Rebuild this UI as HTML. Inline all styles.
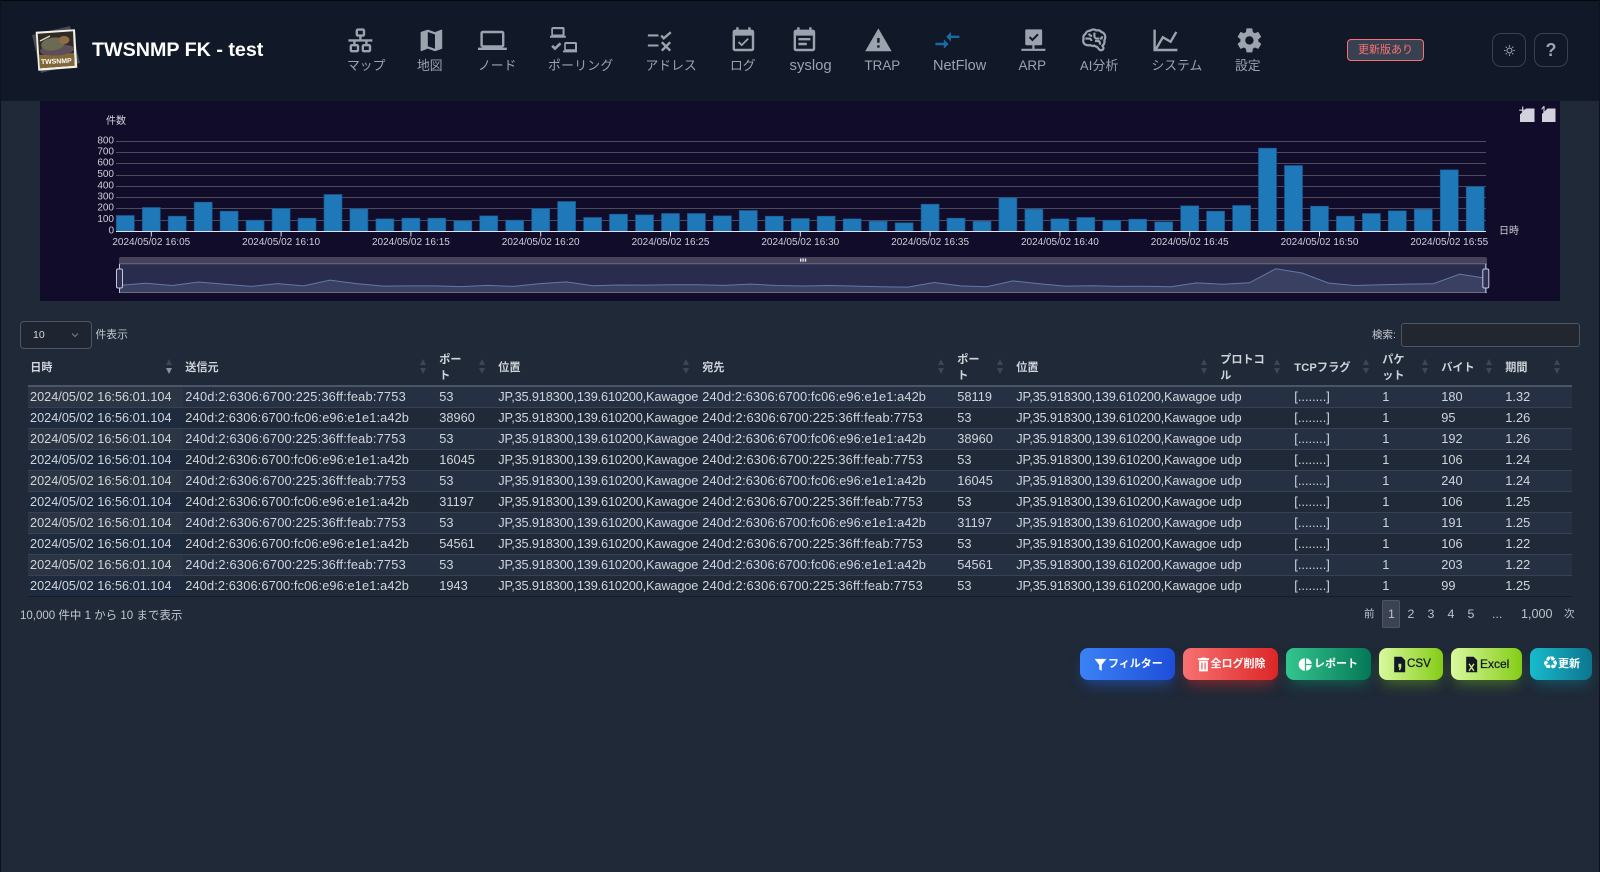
<!DOCTYPE html>
<html lang="ja">
<head>
<meta charset="utf-8">
<title>TWSNMP FK - test</title>
<style>
*{box-sizing:border-box}
html,body{margin:0;padding:0;width:1600px;height:872px;overflow:hidden;background:#1f2937;font-family:"Liberation Sans","Noto Sans CJK JP",sans-serif;color:#d1d5db}
#hdr{position:absolute;left:0;top:0;width:1600px;height:101px;background:#111827;border-top:1px solid #05070b}
#edgeL{position:absolute;left:0;top:0;width:1px;height:872px;background:#0e131d}
#edgeR{position:absolute;right:0;top:0;width:1px;height:872px;background:#0e131d}
.t{position:absolute;white-space:nowrap}
.ic{position:absolute;top:25.6px;width:28.8px;height:28.8px;fill:#9ca3af}
.lb{position:absolute;top:56.5px;line-height:18px;font-size:14px;color:#9ca3af;white-space:nowrap}
.lj{font-size:12.8px}
#title{position:absolute;left:92px;top:37px;line-height:26px;font-size:19.7px;font-weight:bold;color:#fff;white-space:nowrap}
#badge{position:absolute;left:1347px;top:39px;width:77px;height:22px;background:#374151;border:1px solid #f87171;border-radius:4px;color:#f87171;font-size:11px;line-height:20px;text-align:center}
.rb{position:absolute;top:33px;width:34px;height:34px;border:1px solid #374151;border-radius:9px;text-align:center;color:#9ca3af}
#chart{position:absolute;left:40px;top:101px;width:1520px;height:200px;background:#100c2a}
#svgc{position:absolute;left:0;top:0;width:1600px;height:872px}
#sel{position:absolute;left:20px;top:321px;width:72px;height:28px;background:#1f2530;border:1px solid #4b5563;border-radius:4px;font-size:10.5px;line-height:26px;padding-left:12px;color:#d1d5db}
#srch{position:absolute;left:1401px;top:323px;width:179px;height:24px;background:#21262f;border:1px solid #4b5563;border-radius:3px}
table{position:absolute;left:28px;top:351px;width:1544px;table-layout:fixed;border-collapse:separate;border-spacing:0}
th{height:36px;padding:0 0 1px 2.3px;font-size:11.1px;line-height:16px;text-align:left;font-weight:bold;color:#d1d5db;border-bottom:2px solid #4b5563;vertical-align:middle;position:relative}
td{height:21px;padding:0 0 0 2.3px;font-size:12.8px;line-height:20px;white-space:nowrap;color:#d1d5db;border-bottom:1px solid #374151;overflow:visible}
td:first-child{font-size:12.7px;padding-left:2px;letter-spacing:.02px}
td:nth-child(4),td:nth-child(7){letter-spacing:-.18px}
tbody tr:nth-child(odd) td{background:#253042}
tbody tr:nth-child(odd) td:first-child{background:#2b3543}
tbody tr:nth-child(even) td:first-child{background:#1e2a3e}
tbody tr:last-child td{border-bottom:1px solid #151d2b}
td.ip{letter-spacing:.21px}
td.a{letter-spacing:.11px}
.s{position:absolute;width:0;height:0;border-left:3.5px solid transparent;border-right:3.5px solid transparent}
.u{border-bottom:6px solid #3b4656;top:8px}
.d{border-top:6px solid #3b4656;top:17px}
.on{border-top-color:#8b93a0}
.pg{position:absolute;top:605px;font-size:12.4px;line-height:18px;color:#bcc2cb;white-space:nowrap}
#cur{position:absolute;left:1382px;top:600px;width:18px;height:28px;background:#3b4352;border:1px solid #4b5563;border-radius:2px}
.b{position:absolute;top:648px;height:32px;border-radius:8px}
.bt{position:absolute;top:655px;line-height:18px;font-size:11px;font-weight:bold;color:#fff;white-space:nowrap}
.bi{position:absolute;top:656.5px;width:15px;height:15px}
</style>
</head>
<body>
<div id="hdr"></div>

<svg style="position:absolute;left:28px;top:22px;width:60px;height:58px" viewBox="28 22 60 58">
<polygon points="32,35 70,26 80,63 41,73" fill="#454a55"/>
<polygon points="35.7,31.7 75,29.3 77.3,67.7 38.3,70.7" fill="#f1efe6"/>
<polygon points="37.7,33.7 73,31.3 74.6,65.6 40,68.2" fill="#2f2a24"/>
<polygon points="39.3,55 74,53 74.6,65.6 40,68.2" fill="#806737"/>
<ellipse cx="57" cy="50" rx="17" ry="5.5" fill="#5e4e5c" transform="rotate(-4 57 50)"/>
<ellipse cx="53" cy="44" rx="12" ry="6.5" fill="#6d6a53" transform="rotate(-8 53 44)"/>
<ellipse cx="64" cy="40" rx="5.5" ry="4" fill="#8f6c48"/>
<path d="M40 41 L50 36" stroke="#d8d8d0" stroke-width="1.4" fill="none"/>
<text x="41" y="63.5" font-size="6.9" font-weight="bold" fill="#fff" font-family="Liberation Sans,sans-serif" transform="rotate(-2.5 56 62)">TWSNMP</text>
</svg>
<div id="title">TWSNMP FK - test</div>

<svg class="ic" style="left:346.1px" viewBox="0 0 24 24"><path d="M10,2C8.89,2 8,2.89 8,4V7C8,8.11 8.89,9 10,9H11V11H2V13H6V15H5C3.89,15 3,15.89 3,17V20C3,21.11 3.89,22 5,22H9C10.11,22 11,21.11 11,20V17C11,15.89 10.11,15 9,15H8V13H16V15H15C13.89,15 13,15.89 13,17V20C13,21.11 13.89,22 15,22H19C20.11,22 21,21.11 21,20V17C21,15.89 20.11,15 19,15H18V13H22V11H13V9H14C15.11,9 16,8.11 16,7V4C16,2.89 15.11,2 14,2H10M10,4H14V7H10V4M5,17H9V20H5V17M15,17H19V20H15V17Z"/></svg>
<div class="lb lj" style="left:347px">マップ</div>

<svg class="ic" style="left:416.8px" viewBox="0 0 24 24"><path d="M15,19L9,16.89V5L15,7.11M20.5,3C20.44,3 20.39,3 20.34,3L15,5.1L9,3L3.36,4.9C3.15,4.97 3,5.15 3,5.38V20.5A0.5,0.5 0 0,0 3.5,21L3.66,20.97L9,18.9L15,21L20.64,19.1C20.85,19 21,18.85 21,18.62V3.5A0.5,0.5 0 0,0 20.5,3Z"/></svg>
<div class="lb lj" style="left:417px">地図</div>

<svg class="ic" style="left:478.1px" viewBox="0 0 24 24"><path d="M4,6H20V16H4M20,18A2,2 0 0,0 22,16V6C22,4.89 21.1,4 20,4H4C2.89,4 2,4.89 2,6V16A2,2 0 0,0 4,18H0V20H24V18H20Z"/></svg>
<div class="lb lj" style="left:478px">ノード</div>

<svg class="ic" style="left:548.6px" viewBox="0 0 24 24"><path transform="translate(1.2,-.9) scale(.52)" stroke="#9ca3af" stroke-width="1.3" d="M4,6H20V16H4M20,18A2,2 0 0,0 22,16V6C22,4.89 21.1,4 20,4H4C2.89,4 2,4.89 2,6V16A2,2 0 0,0 4,18H0V20H24V18H20Z"/><path transform="translate(12,11.7) scale(.5)" stroke="#9ca3af" stroke-width="1.3" d="M4,6H20V16H4M20,18A2,2 0 0,0 22,16V6C22,4.89 21.1,4 20,4H4C2.89,4 2,4.89 2,6V16A2,2 0 0,0 4,18H0V20H24V18H20Z"/><path d="M2.6 16.5L5 18.8L9.6 14.4" fill="none" stroke="#9ca3af" stroke-width="2.2"/></svg>
<div class="lb lj" style="left:548px;letter-spacing:.3px">ポーリング</div>

<svg class="ic" style="left:644.6px" viewBox="0 0 24 24"><path d="M2.4 7h8.8v1.7H2.4zM2.4 15.4h8.8v1.7H2.4z"/><path d="M13.5 8L15.6 10.3L21.5 5.2M14 13.5L21 20.5M21 13.5L14 20.5" fill="none" stroke="#9ca3af" stroke-width="2"/></svg>
<div class="lb lj" style="left:645.5px">アドレス</div>

<svg class="ic" style="left:728.9px" viewBox="0 0 24 24"><path fill-rule="evenodd" d="M19 3h-1V1h-2v2H8V1H6v2H5C3.9 3 3 3.9 3 5v14c0 1.1.9 2 2 2h14c1.1 0 2-.9 2-2V5c0-1.1-.9-2-2-2zm0 16H5V8h14v11z"/><path d="M16.53 11.06L15.47 10L10.59 14.88L8.47 12.76L7.41 13.82L10.59 17Z"/></svg>
<div class="lb lj" style="left:730px">ログ</div>

<svg class="ic" style="left:790.1px" viewBox="0 0 24 24"><path fill-rule="evenodd" d="M19 3h-1V1h-2v2H8V1H6v2H5C3.9 3 3 3.9 3 5v14c0 1.1.9 2 2 2h14c1.1 0 2-.9 2-2V5c0-1.1-.9-2-2-2zm0 16H5V8h14v11z"/><path d="M7 10h10v2H7zM7 14h7v2H7z"/></svg>
<div class="lb" style="left:789.5px;font-size:14.9px">syslog</div>

<svg class="ic" style="left:863.9px" viewBox="0 0 24 24"><path d="M13 14H11V10H13M13 18H11V16H13M1 21H23L12 2L1 21Z"/></svg>
<div class="lb" style="left:864.5px;font-size:13.4px">TRAP</div>

<svg class="ic" style="left:933.4px;fill:#1a6aa6" viewBox="0 0 24 24"><path d="M9,14H2V16H9V19L13,15L9,11V14M15,13V10H22V8H15V5L11,9L15,13Z"/></svg>
<div class="lb" style="left:933px;font-size:14.5px">NetFlow</div>

<svg class="ic" style="left:1018.8px" viewBox="0 0 24 24"><path d="M6.2 2.8h12.1a1 1 0 0 1 1 1V15a1 1 0 0 1-1 1h-5.4v3h9.1v1.7H2v-1.7h9.1v-3H6.2a1 1 0 0 1-1-1V3.8a1 1 0 0 1 1-1z"/><path d="M8.8 9.2L11.2 11.6L15.8 6.9" fill="none" stroke="#111827" stroke-width="1.7"/></svg>
<div class="lb" style="left:1018.5px;font-size:13.4px">ARP</div>

<svg class="ic" style="left:1079.6px" viewBox="0 0 24 24"><path d="M21.33,12.91C21.42,14.46 20.71,15.95 19.44,16.86L20.21,18.35C20.44,18.8 20.47,19.33 20.27,19.8C20.08,20.27 19.69,20.64 19.21,20.8L18.42,21.05C18.25,21.11 18.06,21.14 17.88,21.14C17.37,21.14 16.89,20.91 16.56,20.5L14.44,18C13.55,17.85 12.71,17.47 12,16.9C11.5,17.05 11,17.13 10.5,17.13C9.62,17.13 8.74,16.86 8,16.34C7.47,16.5 6.93,16.57 6.38,16.56C5.59,16.57 4.81,16.41 4.08,16.11C2.65,15.47 1.7,14.07 1.65,12.5C1.57,11.78 1.69,11.05 2,10.39C1.71,9.64 1.68,8.82 1.93,8.06C2.3,7.11 3,6.32 3.87,5.82C4.45,4.13 6.08,3 7.87,3.12C9.47,1.62 11.92,1.46 13.7,2.75C14.12,2.64 14.56,2.58 15,2.58C16.36,2.55 17.65,3.15 18.5,4.22C20.54,4.75 22,6.57 22.08,8.68C22.13,9.8 21.83,10.91 21.22,11.85C21.29,12.2 21.33,12.55 21.33,12.91Z" fill="none" stroke="#9ca3af" stroke-width="2.1" transform="translate(1.2 1.2) scale(.9)"/><path d="M4.5 10.5h3.2c1.2 0 1.8 1 1.8 2M12 5.5v3c0 1.2 1 2 2.2 2h2M7.5 6.3c.3 1.5 1.3 2 2.6 2M18.5 8.5c0 1.3-.7 2-1.8 2.2M12.5 12.5h2.3c1.2 0 1.8.7 1.8 1.8v1.2" fill="none" stroke="#9ca3af" stroke-width="1.8"/></svg>
<div class="lb lj" style="left:1080px;letter-spacing:.2px">AI分析</div>

<svg class="ic" style="left:1151.1px" viewBox="0 0 24 24"><path d="M16,11.78L20.24,4.45L21.97,5.45L16.74,14.5L10.23,10.75L5.46,19H22V21H2V3H4V17.54L9.5,8L16,11.78Z"/></svg>
<div class="lb lj" style="left:1151.5px">システム</div>

<svg class="ic" style="left:1235.1px" viewBox="0 0 24 24"><path d="M12,15.5A3.5,3.5 0 0,1 8.5,12A3.5,3.5 0 0,1 12,8.5A3.5,3.5 0 0,1 15.5,12A3.5,3.5 0 0,1 12,15.5M19.43,12.97C19.47,12.65 19.5,12.33 19.5,12C19.5,11.67 19.47,11.34 19.43,11L21.54,9.37C21.73,9.22 21.78,8.95 21.66,8.73L19.66,5.27C19.54,5.05 19.27,4.96 19.05,5.05L16.56,6.05C16.04,5.66 15.5,5.32 14.87,5.07L14.5,2.42C14.46,2.18 14.25,2 14,2H10C9.75,2 9.54,2.18 9.5,2.42L9.13,5.07C8.5,5.32 7.96,5.66 7.44,6.05L4.95,5.05C4.73,4.96 4.46,5.05 4.34,5.27L2.34,8.73C2.21,8.95 2.27,9.22 2.46,9.37L4.57,11C4.53,11.34 4.5,11.67 4.5,12C4.5,12.33 4.53,12.65 4.57,12.97L2.46,14.63C2.27,14.78 2.21,15.05 2.34,15.27L4.34,18.73C4.46,18.95 4.73,19.03 4.95,18.95L7.44,17.94C7.96,18.34 8.5,18.68 9.13,18.93L9.5,21.58C9.54,21.82 9.75,22 10,22H14C14.25,22 14.46,21.82 14.5,21.58L14.87,18.93C15.5,18.67 16.04,18.34 16.56,17.94L19.05,18.95C19.27,19.03 19.54,18.95 19.66,18.73L21.66,15.27C21.78,15.05 21.73,14.78 21.54,14.63L19.43,12.97Z"/></svg>
<div class="lb lj" style="left:1235px">設定</div>

<div id="badge">更新版あり</div>
<div class="rb" style="left:1492px"><svg width="13" height="13" viewBox="0 0 24 24" style="margin-top:10px" fill="none" stroke="#9ca3af" stroke-width="2"><circle cx="12" cy="12" r="4.5"/><path d="M12 2v3M12 19v3M2 12h3M19 12h3M5 5l2 2M17 17l2 2M5 19l2-2M17 7l2-2"/></svg></div>
<div class="rb" style="left:1534px;font-size:18px;font-weight:bold;line-height:32px">?</div>

<div id="chart"></div>
<svg id="svgc" viewBox="0 0 1600 872" font-family="Liberation Sans,Noto Sans CJK JP,sans-serif">
<g stroke="#4d4c5c" stroke-width="1">
<path d="M116 141.5H1486M116 152.5H1486M116 163.5H1486M116 175.5H1486M116 186.5H1486M116 197.5H1486M116 208.5H1486M116 220.5H1486" fill="none"/>
</g>
<path fill="#1f78b8" stroke="#18568f" stroke-width=".7" d="M116.3 231.5v-16h18v16zM142.3 231.5v-24h18v24zM168.2 231.5v-15.3h18v15.3zM194.2 231.5v-29.3h18v29.3zM220.1 231.5v-20.3h18v20.3zM246.1 231.5v-11.3h18v11.3zM272.1 231.5v-23h18v23zM298 231.5v-13.3h18v13.3zM324 231.5v-37h18v37zM349.9 231.5v-22.7h18v22.7zM375.9 231.5v-12.7h18v12.7zM401.9 231.5v-13.3h18v13.3zM427.8 231.5v-13.3h18v13.3zM453.8 231.5v-10.7h18v10.7zM479.7 231.5v-15.7h18v15.7zM505.7 231.5v-11.3h18v11.3zM531.7 231.5v-23h18v23zM557.6 231.5v-30h18v30zM583.6 231.5v-14h18v14zM609.5 231.5v-17.3h18v17.3zM635.5 231.5v-16.7h18v16.7zM661.5 231.5v-18h18v18zM687.4 231.5v-18h18v18zM713.4 231.5v-15.7h18v15.7zM739.3 231.5v-21h18v21zM765.3 231.5v-15.3h18v15.3zM791.3 231.5v-13h18v13zM817.2 231.5v-15.3h18v15.3zM843.2 231.5v-12.7h18v12.7zM869.1 231.5v-10.3h18v10.3zM895.1 231.5v-8.7h18v8.7zM921.1 231.5v-27.3h18v27.3zM947 231.5v-13.3h18v13.3zM973 231.5v-10.3h18v10.3zM998.9 231.5v-33.7h18v33.7zM1024.9 231.5v-22.3h18v22.3zM1050.9 231.5v-12.7h18v12.7zM1076.8 231.5v-14h18v14zM1102.8 231.5v-11.3h18v11.3zM1128.7 231.5v-12.3h18v12.3zM1154.7 231.5v-9.7h18v9.7zM1180.7 231.5v-25.7h18v25.7zM1206.6 231.5v-20.3h18v20.3zM1232.6 231.5v-26h18v26zM1258.5 231.5v-83.3h18v83.3zM1284.5 231.5v-66h18v66zM1310.5 231.5v-25.3h18v25.3zM1336.4 231.5v-15.3h18v15.3zM1362.4 231.5v-18h18v18zM1388.3 231.5v-20.7h18v20.7zM1414.3 231.5v-22.3h18v22.3zM1440.3 231.5v-61.7h18v61.7zM1466.2 231.5v-45h18v45z"/>
<path d="M116 231.5H1486" stroke="#e4e4ea" stroke-width="1" fill="none"/>
<path d="M151.3 231.5v5M281.1 231.5v5M410.9 231.5v5M540.7 231.5v5M670.5 231.5v5M800.3 231.5v5M930.1 231.5v5M1059.9 231.5v5M1189.7 231.5v5M1319.5 231.5v5M1449.3 231.5v5" stroke="#e4e4ea" stroke-width="1" fill="none"/>
<g font-size="10" fill="#cfcfd6" text-anchor="end">
<text x="114" y="143.5">800</text><text x="114" y="154.5">700</text><text x="114" y="165.5">600</text><text x="114" y="177">500</text><text x="114" y="188.5">400</text><text x="114" y="199.5">300</text><text x="114" y="210.5">200</text><text x="114" y="222">100</text><text x="114" y="233.5">0</text>
</g>
<g font-size="10" fill="#cfcfd6" text-anchor="middle">
<text x="151.3" y="245">2024/05/02 16:05</text><text x="281.1" y="245">2024/05/02 16:10</text><text x="410.9" y="245">2024/05/02 16:15</text><text x="540.7" y="245">2024/05/02 16:20</text><text x="670.5" y="245">2024/05/02 16:25</text><text x="800.3" y="245">2024/05/02 16:30</text><text x="930.1" y="245">2024/05/02 16:35</text><text x="1059.9" y="245">2024/05/02 16:40</text><text x="1189.7" y="245">2024/05/02 16:45</text><text x="1319.5" y="245">2024/05/02 16:50</text><text x="1449.3" y="245">2024/05/02 16:55</text>
</g>
<text x="106" y="124" font-size="10" fill="#cfcfd6">件数</text>
<text x="1499" y="234" font-size="10" fill="#cfcfd6">日時</text>

<path d="M119 259a2 2 0 0 1 2-2H1485a2 2 0 0 1 2 2v5H119z" fill="#45425a"/>
<rect x="119" y="264" width="1368" height="29" fill="#2a2c4e"/>
<path fill="#3a4062" d="M119.8 292L119.8 285.3 146.1 283.3 172.3 285.5 198.6 282 224.9 284.2 251.2 286.4 277.4 283.6 303.7 285.9 330 280.1 356.2 283.6 382.5 286.1 408.8 285.9 435 285.9 461.3 286.6 487.6 285.4 513.9 286.4 540.1 283.6 566.4 281.9 592.7 285.8 618.9 285 645.2 285.1 671.5 284.8 697.7 284.8 724 285.4 750.3 284.1 776.6 285.5 802.8 286 829.1 285.5 855.4 286.1 881.6 286.7 907.9 287.1 934.2 282.5 960.4 285.9 986.7 286.7 1013 280.9 1039.3 283.7 1065.5 286.1 1091.8 285.8 1118.1 286.4 1144.3 286.2 1170.6 286.8 1196.9 282.9 1223.1 284.2 1249.4 282.8 1275.7 268.8 1302 273 1328.2 283 1354.5 285.5 1380.8 284.8 1407 284.1 1433.3 283.7 1459.6 274.1 1485.8 278.2 1485.8 292Z"/>
<polyline fill="none" stroke="#5f7aa6" stroke-width="1" points="119.8,285.3 146.1,283.3 172.3,285.5 198.6,282 224.9,284.2 251.2,286.4 277.4,283.6 303.7,285.9 330,280.1 356.2,283.6 382.5,286.1 408.8,285.9 435,285.9 461.3,286.6 487.6,285.4 513.9,286.4 540.1,283.6 566.4,281.9 592.7,285.8 618.9,285 645.2,285.1 671.5,284.8 697.7,284.8 724,285.4 750.3,284.1 776.6,285.5 802.8,286 829.1,285.5 855.4,286.1 881.6,286.7 907.9,287.1 934.2,282.5 960.4,285.9 986.7,286.7 1013,280.9 1039.3,283.7 1065.5,286.1 1091.8,285.8 1118.1,286.4 1144.3,286.2 1170.6,286.8 1196.9,282.9 1223.1,284.2 1249.4,282.8 1275.7,268.8 1302,273 1328.2,283 1354.5,285.5 1380.8,284.8 1407,284.1 1433.3,283.7 1459.6,274.1 1485.8,278.2"/>
<path d="M119 263.7H1487M119 292.5H1487" stroke="#6d6c80" stroke-width="1" fill="none"/>
<g fill="#e6e6ee"><rect x="800" y="258.5" width="1.4" height="3.2"/><rect x="802.4" y="258.5" width="1.4" height="3.2"/><rect x="804.8" y="258.5" width="1.4" height="3.2"/></g>
<g stroke="#c6c8dc" stroke-width="1" fill="#2f3154">
<path d="M119.5 264V293M1485.8 264V293" fill="none"/>
<rect x="116.5" y="269" width="6" height="19" rx="1.5"/>
<rect x="1482.8" y="269" width="6" height="19" rx="1.5"/>
</g>
<g fill="#d2d2dc">
<path d="M1526 108.5h8.5V122h-14.5v-7.5z"/>
<path d="M1522.7 106.5v7.5M1519.2 110.2h7.5" stroke="#d2d2dc" stroke-width="1.2" fill="none"/>
<path d="M1547.5 108.5h8V122H1542v-8z"/>
<path d="M1544 106v7.5M1544 106.3l-2.4 3" stroke="#d2d2dc" stroke-width="1.1" fill="none"/>
</g>
</svg>

<div id="sel">10</div>
<svg style="position:absolute;left:71px;top:332px" width="8" height="6" viewBox="0 0 8 6"><path d="M1 1.5L4 4.5L7 1.5" fill="none" stroke="#7b8391" stroke-width="1"/></svg>
<div class="t" style="left:95.5px;top:326px;font-size:10.8px;line-height:18px;color:#c4c8cf">件表示</div>
<div class="t" style="left:1372px;top:326px;font-size:10.5px;line-height:18px;color:#c4c8cf">検索:</div>
<div id="srch"></div>

<table>
<colgroup><col style="width:155px"><col style="width:254px"><col style="width:59px"><col style="width:204px"><col style="width:255px"><col style="width:59px"><col style="width:204px"><col style="width:74px"><col style="width:88px"><col style="width:59px"><col style="width:64px"><col style="width:69px"></colgroup>
<thead><tr>
<th>日時<i class="s u" style="left:138px"></i><i class="s d on" style="left:138px"></i></th>
<th>送信元<i class="s u" style="left:237px"></i><i class="s d" style="left:237px"></i></th>
<th><div style="width:30px">ポート</div><i class="s u" style="left:42px"></i><i class="s d" style="left:42px"></i></th>
<th>位置<i class="s u" style="left:187px"></i><i class="s d" style="left:187px"></i></th>
<th>宛先<i class="s u" style="left:238px"></i><i class="s d" style="left:238px"></i></th>
<th><div style="width:30px">ポート</div><i class="s u" style="left:42px"></i><i class="s d" style="left:42px"></i></th>
<th>位置<i class="s u" style="left:187px"></i><i class="s d" style="left:187px"></i></th>
<th><div style="width:48px">プロトコル</div><i class="s u" style="left:56px"></i><i class="s d" style="left:56px"></i></th>
<th><span style="letter-spacing:.15px">TCPフラグ</span><i class="s u" style="left:71px"></i><i class="s d" style="left:71px"></i></th>
<th><div style="width:30px">パケット</div><i class="s u" style="left:42px"></i><i class="s d" style="left:42px"></i></th>
<th>バイト<i class="s u" style="left:46.5px"></i><i class="s d" style="left:46.5px"></i></th>
<th>期間<i class="s u" style="left:51px"></i><i class="s d" style="left:51px"></i></th>
</tr></thead>
<tbody>
<tr><td>2024/05/02 16:56:01.104</td><td class="ip">240d:2:6306:6700:225:36ff:feab:7753</td><td>53</td><td>JP,35.918300,139.610200,Kawagoe</td><td class="a">240d:2:6306:6700:fc06:e96:e1e1:a42b</td><td>58119</td><td>JP,35.918300,139.610200,Kawagoe</td><td>udp</td><td>[........]</td><td>1</td><td>180</td><td>1.32</td></tr>
<tr><td>2024/05/02 16:56:01.104</td><td class="a">240d:2:6306:6700:fc06:e96:e1e1:a42b</td><td>38960</td><td>JP,35.918300,139.610200,Kawagoe</td><td class="ip">240d:2:6306:6700:225:36ff:feab:7753</td><td>53</td><td>JP,35.918300,139.610200,Kawagoe</td><td>udp</td><td>[........]</td><td>1</td><td>95</td><td>1.26</td></tr>
<tr><td>2024/05/02 16:56:01.104</td><td class="ip">240d:2:6306:6700:225:36ff:feab:7753</td><td>53</td><td>JP,35.918300,139.610200,Kawagoe</td><td class="a">240d:2:6306:6700:fc06:e96:e1e1:a42b</td><td>38960</td><td>JP,35.918300,139.610200,Kawagoe</td><td>udp</td><td>[........]</td><td>1</td><td>192</td><td>1.26</td></tr>
<tr><td>2024/05/02 16:56:01.104</td><td class="a">240d:2:6306:6700:fc06:e96:e1e1:a42b</td><td>16045</td><td>JP,35.918300,139.610200,Kawagoe</td><td class="ip">240d:2:6306:6700:225:36ff:feab:7753</td><td>53</td><td>JP,35.918300,139.610200,Kawagoe</td><td>udp</td><td>[........]</td><td>1</td><td>106</td><td>1.24</td></tr>
<tr><td>2024/05/02 16:56:01.104</td><td class="ip">240d:2:6306:6700:225:36ff:feab:7753</td><td>53</td><td>JP,35.918300,139.610200,Kawagoe</td><td class="a">240d:2:6306:6700:fc06:e96:e1e1:a42b</td><td>16045</td><td>JP,35.918300,139.610200,Kawagoe</td><td>udp</td><td>[........]</td><td>1</td><td>240</td><td>1.24</td></tr>
<tr><td>2024/05/02 16:56:01.104</td><td class="a">240d:2:6306:6700:fc06:e96:e1e1:a42b</td><td>31197</td><td>JP,35.918300,139.610200,Kawagoe</td><td class="ip">240d:2:6306:6700:225:36ff:feab:7753</td><td>53</td><td>JP,35.918300,139.610200,Kawagoe</td><td>udp</td><td>[........]</td><td>1</td><td>106</td><td>1.25</td></tr>
<tr><td>2024/05/02 16:56:01.104</td><td class="ip">240d:2:6306:6700:225:36ff:feab:7753</td><td>53</td><td>JP,35.918300,139.610200,Kawagoe</td><td class="a">240d:2:6306:6700:fc06:e96:e1e1:a42b</td><td>31197</td><td>JP,35.918300,139.610200,Kawagoe</td><td>udp</td><td>[........]</td><td>1</td><td>191</td><td>1.25</td></tr>
<tr><td>2024/05/02 16:56:01.104</td><td class="a">240d:2:6306:6700:fc06:e96:e1e1:a42b</td><td>54561</td><td>JP,35.918300,139.610200,Kawagoe</td><td class="ip">240d:2:6306:6700:225:36ff:feab:7753</td><td>53</td><td>JP,35.918300,139.610200,Kawagoe</td><td>udp</td><td>[........]</td><td>1</td><td>106</td><td>1.22</td></tr>
<tr><td>2024/05/02 16:56:01.104</td><td class="ip">240d:2:6306:6700:225:36ff:feab:7753</td><td>53</td><td>JP,35.918300,139.610200,Kawagoe</td><td class="a">240d:2:6306:6700:fc06:e96:e1e1:a42b</td><td>54561</td><td>JP,35.918300,139.610200,Kawagoe</td><td>udp</td><td>[........]</td><td>1</td><td>203</td><td>1.22</td></tr>
<tr><td>2024/05/02 16:56:01.104</td><td class="a">240d:2:6306:6700:fc06:e96:e1e1:a42b</td><td>1943</td><td>JP,35.918300,139.610200,Kawagoe</td><td class="ip">240d:2:6306:6700:225:36ff:feab:7753</td><td>53</td><td>JP,35.918300,139.610200,Kawagoe</td><td>udp</td><td>[........]</td><td>1</td><td>99</td><td>1.25</td></tr>
</tbody>
</table>

<div class="t" style="left:20px;top:606.5px;font-size:11.5px;line-height:18px;color:#c4c8cf">10,000 件中 1 から 10 まで表示</div>

<div class="pg" style="left:1364px;font-size:10.5px">前</div>
<div id="cur"></div>
<div class="pg" style="left:1388px">1</div>
<div class="pg" style="left:1407.5px">2</div>
<div class="pg" style="left:1427.5px">3</div>
<div class="pg" style="left:1447.5px">4</div>
<div class="pg" style="left:1467.5px">5</div>
<div class="pg" style="left:1492px">...</div>
<div class="pg" style="left:1521px;font-size:12.6px">1,000</div>
<div class="pg" style="left:1564px;font-size:10.5px">次</div>

<div class="b" style="left:1080px;width:95px;background:linear-gradient(90deg,#3b82f6,#1d4ed8);box-shadow:0 8px 14px -4px rgba(37,99,235,.55)"></div>
<svg class="bi" style="left:1092.5px" viewBox="0 0 24 24" fill="#fff"><path d="M2.5 3h19l-7.5 9.5V22l-4-2v-7.5z"/></svg>
<div class="bt" style="left:1108px">フィルター</div>

<div class="b" style="left:1183px;width:95px;background:linear-gradient(90deg,#f87171,#dc2626);box-shadow:0 8px 14px -4px rgba(220,38,38,.55)"></div>
<svg class="bi" style="left:1195.5px" viewBox="0 0 24 24" fill="#fff"><path fill-rule="evenodd" d="M3 2h5l1-1h6l1 1h5v3H3zM5 6h14v17H5zM8.5 9v11h2V9zM13.5 9v11h2V9z"/></svg>
<div class="bt" style="left:1210.5px">全ログ削除</div>

<div class="b" style="left:1286px;width:85px;background:linear-gradient(90deg,#34c58e,#047857);box-shadow:0 8px 14px -4px rgba(5,150,105,.5)"></div>
<svg class="bi" style="left:1297.5px" viewBox="0 0 24 24" fill="#fff"><path d="M11 2v20a10 10 0 0 1 0-20zM13 2a10 10 0 0 1 9 9h-9zM13 13h9a10 10 0 0 1-9 9z"/></svg>
<div class="bt" style="left:1314px">レポート</div>

<div class="b" style="left:1379px;width:64px;background:linear-gradient(90deg,#d9f99d,#84cc16);box-shadow:0 8px 14px -4px rgba(132,204,22,.4)"></div>
<svg class="bi" style="left:1391px;width:17px;height:17px;top:655.5px" viewBox="0 0 24 24" fill="#111827"><path fill-rule="evenodd" d="M4.5 1h10.5l5 5v17H4.5zM10.5 11h4v5l-1.5 4h-2l1-4h-1.5z"/></svg>
<div class="bt" style="left:1407px;color:#111827;font-size:11.6px;font-weight:normal;-webkit-text-stroke:.25px #111827">CSV</div>

<div class="b" style="left:1451px;width:71px;background:linear-gradient(90deg,#d9f99d,#84cc16);box-shadow:0 8px 14px -4px rgba(132,204,22,.4)"></div>
<svg class="bi" style="left:1463px;width:17px;height:17px;top:655.5px" viewBox="0 0 24 24" fill="#111827"><path fill-rule="evenodd" d="M4.5 1h10.5l5 5v17H4.5z"/><path d="M8.5 11L15.5 21M15.5 11L8.5 21" stroke="#cfe870" stroke-width="2" fill="none"/></svg>
<div class="bt" style="left:1480px;color:#111827;font-size:12px;font-weight:normal;-webkit-text-stroke:.25px #111827">Excel</div>

<div class="b" style="left:1530px;width:62px;background:linear-gradient(90deg,#17bccb,#0e7490);box-shadow:0 8px 14px -4px rgba(6,182,212,.3)"></div>
<div class="t" style="left:1542.5px;top:653.5px;line-height:20px;font-size:18px;font-weight:bold;color:#fff;font-family:'DejaVu Sans',sans-serif">♻</div>
<div class="bt" style="left:1558px">更新</div>

<div id="edgeL"></div>
<div id="edgeR"></div>
</body>
</html>
